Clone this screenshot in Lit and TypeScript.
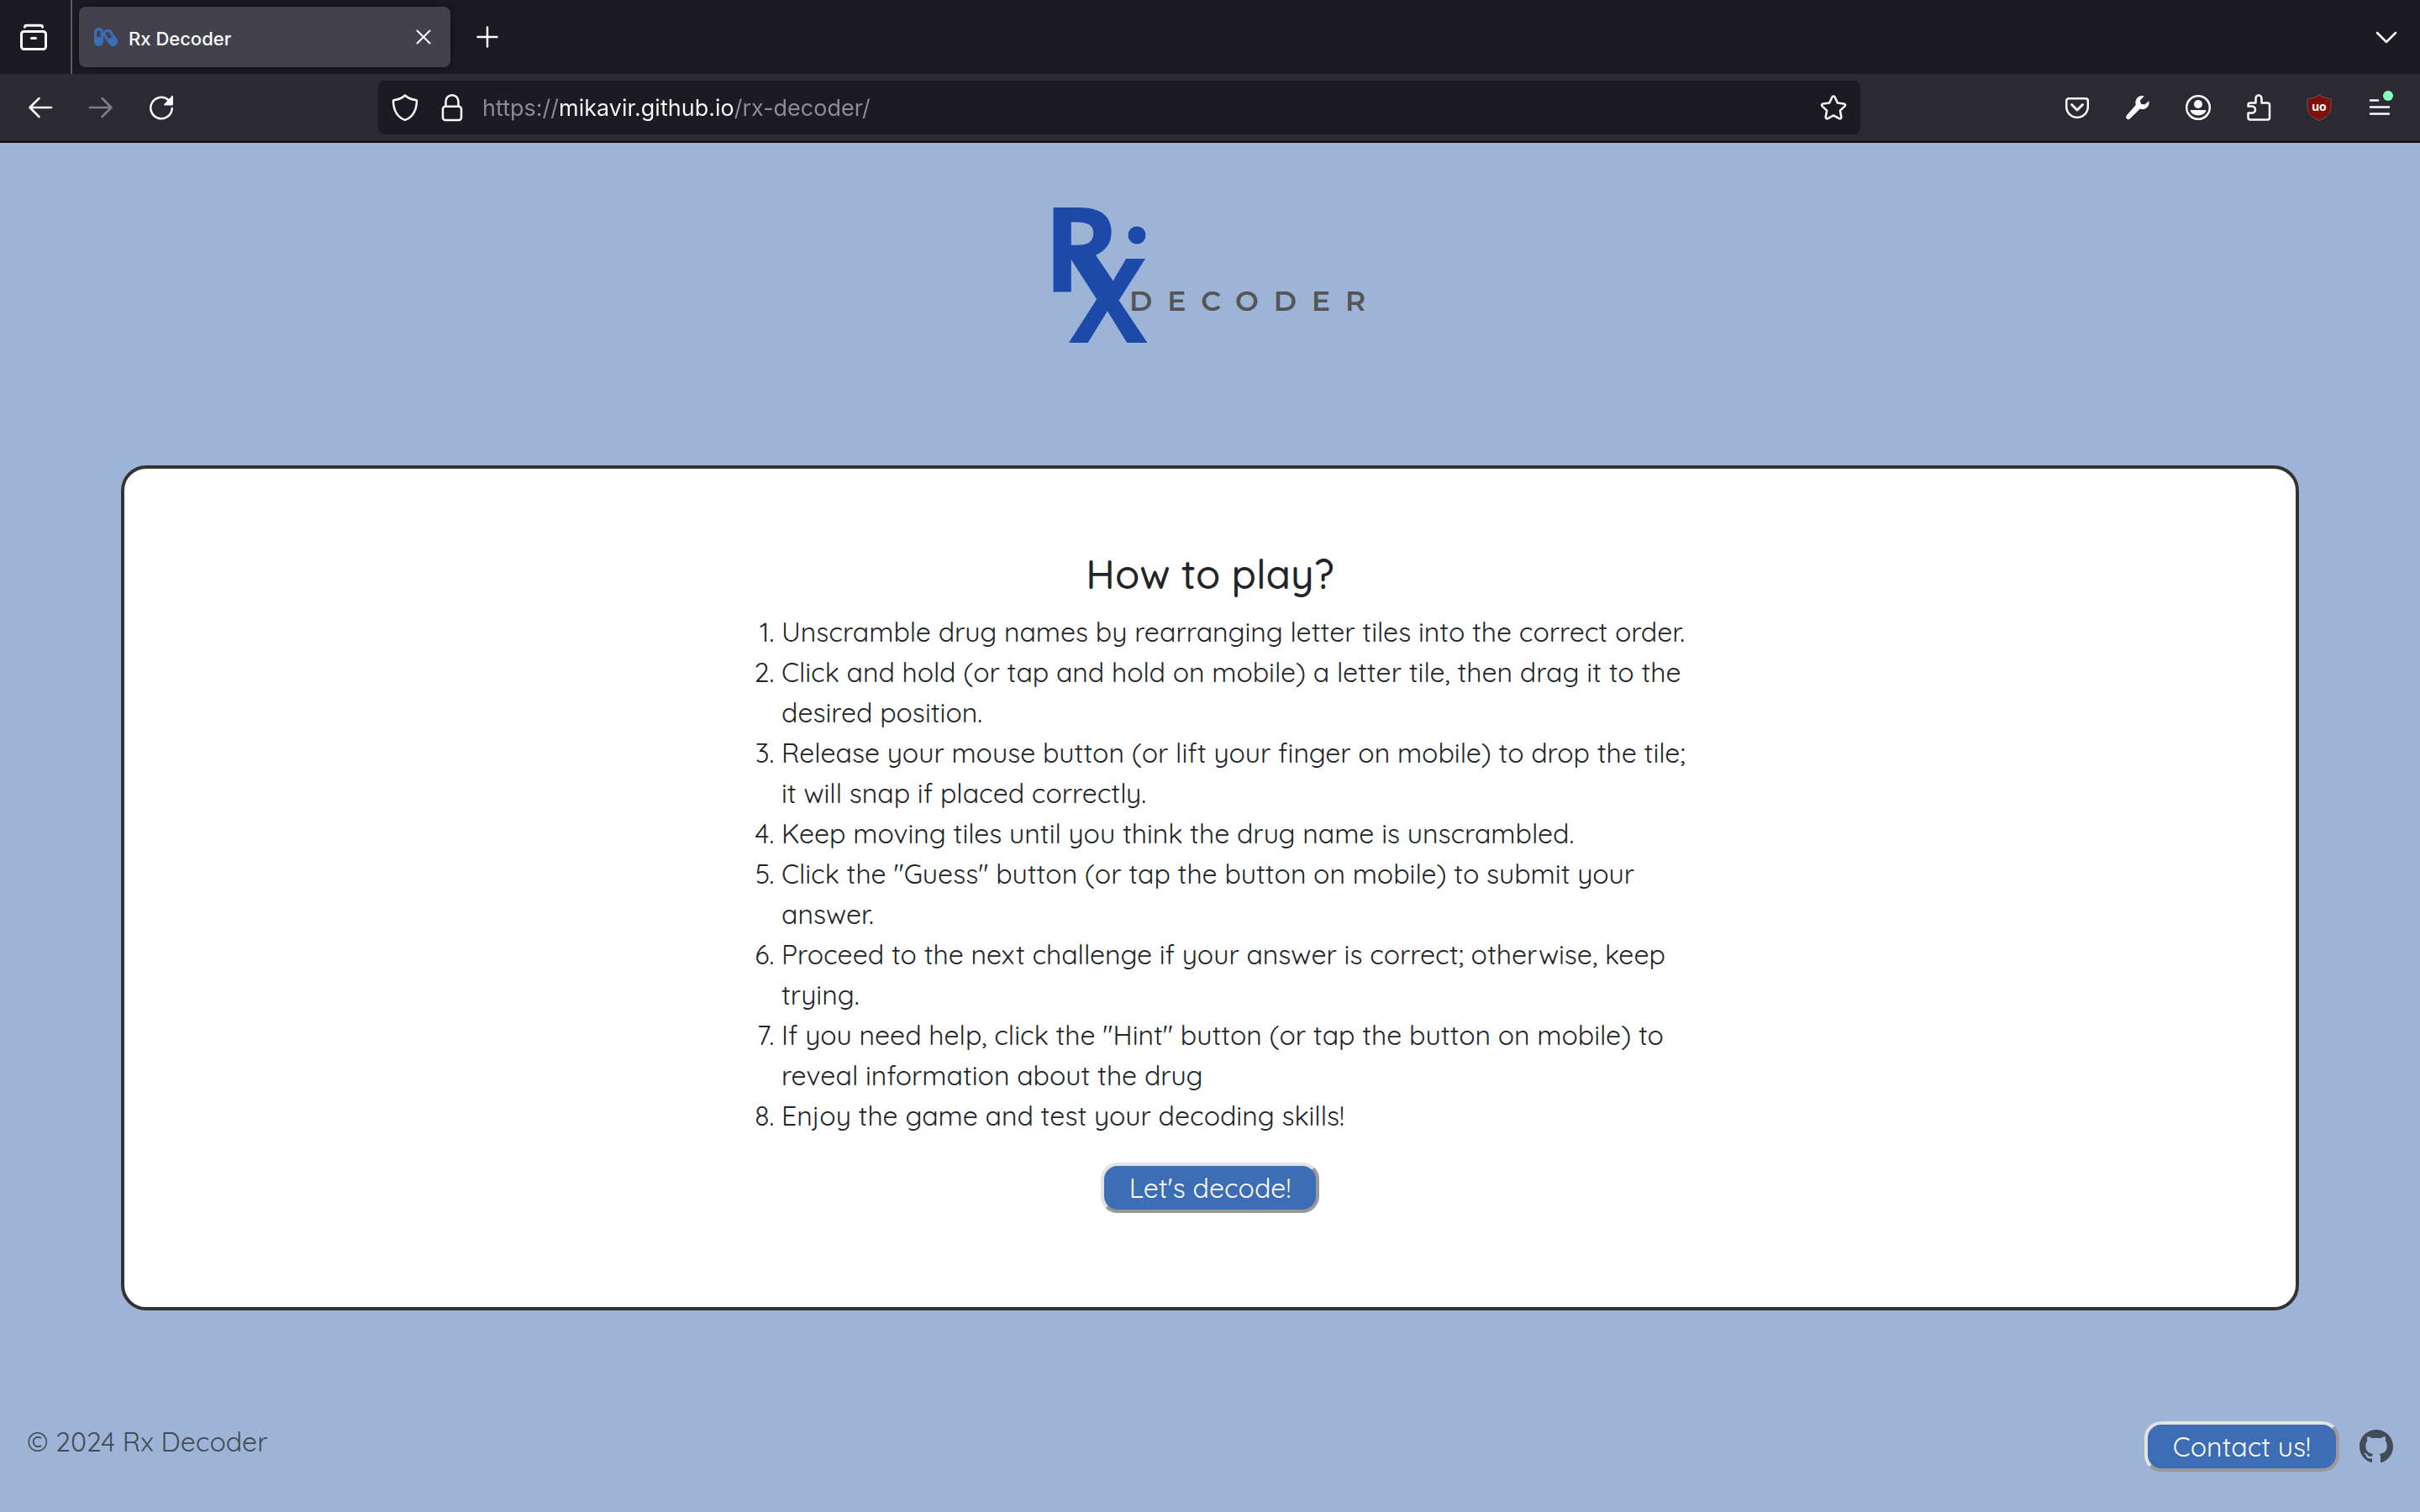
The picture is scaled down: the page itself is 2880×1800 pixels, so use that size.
import { LitElement, html, svg, css } from "lit";
import { customElement } from "lit/decorators.js";

const line = (body: unknown) => html`<svg class="icon" viewBox="0 0 32 32" aria-hidden="true">${body}</svg>`;

const icons = {
  view: line(svg`<path d="M5.500 4.300V4a2 2 0 0 1 2-1.800h17a2 2 0 0 1 2 1.800v.3M13.500 17.500h5" stroke-width="3"/><rect x="1.500" y="9.500" width="29" height="21" rx="3" stroke-width="3"/>`),
  close: line(svg`<path d="M8.500 8.500l15 15M23.500 8.500l-15 15" stroke-width="2"/>`),
  plus: line(svg`<path d="M16 4.500v23M4.500 16h23" stroke-width="2.500"/>`),
  chevron: line(svg`<path d="M5 11l11 11 11-11"/>`),
  back: line(svg`<path d="M29 16H3.500M14.500 5L3.500 16l11 11"/>`),
  forward: line(svg`<path d="M3 16h25.500M17.500 5l11 11-11 11"/>`),
  reload: line(svg`<path d="M28.700 17A12.700 12.700 0 1 1 24.800 7.400"/><path class="solid" d="M30 2.600v10a.8.8 0 0 1-.8.8h-9.200c-.8 0-1.100-.9-.6-1.400L28.600 2c.5-.5 1.400-.2 1.400.6z"/>`),
  shield: line(svg`<path d="M16 1.500c3.500 3.200 8 5 12.500 5.500 1 .1 1.500.8 1.500 1.700C29.500 20 25 27.500 16 30.800 7 27.500 2.500 20 2 8.700 2 7.800 2.500 7.100 3.500 7 8 6.500 12.500 4.700 16 1.500z"/>`),
  lock: line(svg`<path d="M8.500 14.500V8.700a7.500 7.500 0 0 1 15 0v5.800"/><rect x="5" y="14.700" width="22" height="16.300" rx="3"/>`),
  star: line(svg`<path d="M16 2.500c.7 0 1.300.4 1.600 1l3.200 7 7.700 1c1.500.2 2 1.900 1 2.900l-5.600 5.300 1.400 7.600c.2 1.400-1.200 2.500-2.500 1.800L16 25.400l-6.800 3.700c-1.300.7-2.700-.4-2.500-1.800l1.400-7.600-5.600-5.300c-1-1-.5-2.700 1-2.900l7.700-1 3.200-7c.3-.6.900-1 1.600-1z"/>`),
  pocket: line(svg`<path d="M6 5.200h20a2.800 2.800 0 0 1 2.800 2.800v7a12.800 12.800 0 0 1-25.600 0V8A2.800 2.800 0 0 1 6 5.200z"/><path d="M9.500 12.500l6.500 6.500 6.500-6.500" stroke-width="3"/>`),
  wrench: line(svg`<path class="solid" d="M29.400 8.200l-5.200 4.400-4.200-.800-1.200-4L23.600 2.400c-3.400-.9-7.400.4-9.200 3.600-1.300 2.300-1.300 4.500-.5 6.800L2.800 25.600a2.700 2.700 0 0 0 3.800 3.800L18.800 17.600c2.600 1 5.800.5 8-1.400 2.400-2.100 3.400-5.200 2.600-8z"/>`),
  account: line(svg`<circle cx="16" cy="16" r="13.800"/><circle class="solid" cx="16" cy="12" r="5"/><path class="solid" d="M7.500 19h17c.6 0 1 .6.800 1.100C24 23.400 20.300 25.500 16 25.500S8 23.400 6.700 20.100c-.2-.5.2-1.100.8-1.100z"/>`),
  puzzle: line(svg`<path d="M12.500 10.500V5a3.500 3.500 0 0 1 7 0v5.500h7a2.500 2.500 0 0 1 2.500 2.500v15a2.500 2.500 0 0 1-2.500 2.500H6A2.500 2.500 0 0 1 3.500 28v-5.500H8a4 4 0 0 0 0-8H3.500V13A2.500 2.500 0 0 1 6 10.500z"/>`),
  blocker: line(svg`<path d="M16 .8c3.600 2.800 8.200 4.400 14 4.600v11.100C30 23.500 24 28.500 16 31.300 8 28.500 2 23.500 2 16.500V5.400C7.800 5.200 12.400 3.600 16 .8z" fill="#7c100a" stroke="#6e5056" stroke-width="1"/><text class="badge" x="16" y="20" text-anchor="middle">uo</text>`),
  menu: line(svg`<path d="M5 7.500h9M5 15.500h22M5 23.500h22"/><circle cx="26" cy="2" r="6" fill="#88ffbf" stroke="none"/>`),
};

@customElement("browser-bar")
export class BrowserBar extends LitElement {
  static styles = css`
    :host { display: block; font-family: Inter, "Liberation Sans", sans-serif; color: #fbfbfe; }
    button { display: flex; align-items: center; justify-content: center; padding: 0; border: 0; background: none; color: inherit; font: inherit; }
    .icon { display: block; width: 32px; height: 32px; overflow: visible; fill: none; stroke: currentColor; stroke-width: 2.500; stroke-linecap: round; stroke-linejoin: round; }
    .solid { fill: currentColor; stroke: none; }
    .badge { fill: #ffffff; stroke: none; font-size: 14px; font-weight: 700; }
    .tabs { display: flex; align-items: center; height: 88px; background: #1c1b22; }
    .view { box-sizing: border-box; width: 86px; height: 88px; padding-right: 4px; border-right: 2px solid #5b5b66; }
    .tab { display: flex; align-items: center; width: 442px; height: 72px; box-sizing: border-box; margin-left: 8px; padding: 0 16px 0 18px; border-radius: 8px; background: #42414d; box-shadow: 0 0 8px rgba(0, 0, 0, 0.5); }
    .favicon { width: 28px; height: 24px; fill: #3c6db7; }
    .title { flex: 1; margin-left: 13px; padding-top: 3px; font-size: 22px; font-weight: 500; line-height: 32px; }
    .new { width: 72px; height: 72px; margin-left: 8px; }
    .list { width: 72px; height: 72px; margin: 0 4px 0 auto; }
    .tools { display: flex; align-items: center; height: 80px; padding: 0 12px; border-bottom: 2px solid #0c0c0d; background: #2b2a33; }
    .tool { width: 72px; height: 64px; }
    .dim { color: #7f7e86; }
    .spring { flex: 10; }
    .address { display: flex; flex: 78; align-items: center; box-sizing: border-box; height: 64px; min-width: 0; padding: 0 16px; border-radius: 8px; background: #1c1b22; }
    .lock { margin-left: 24px; }
    .url { flex: 1; min-width: 0; height: 48px; margin: 0 20px; padding: 0; border: 0; outline: 0; font-family: inherit; font-size: 27px; color: #fbfbfe;
      background: linear-gradient(90deg, #8d8d93 92px, #fbfbfe 92px, #fbfbfe 299px, #8d8d93 299px); -webkit-background-clip: text; background-clip: text; -webkit-text-fill-color: transparent; }
  `;

  render() {
    return html`
      <div class="tabs">
        <button class="view" aria-label="View recent browsing">${icons.view}</button>
        <div class="tab">
          <svg class="favicon" viewBox="0 16 576 480" aria-hidden="true"><path d="M555.3 300.1L424.3 112.8C401.9 80.7 366.4 64 330.4 64c-22.6 0-45.5 6.6-65.4 20.500-19.1 13.3-32 31.900-39.3 52C221.900 77.4 173.1 32 112 32 50.1 32 0 82.1 0 144v224c0 61.900 50.1 112 112 112s112-50.1 112-112V218.900c3.3 8.6 7.3 17.1 12.8 25L368 431.2c22.3 32.1 57.900 48.8 93.8 48.8 22.7 0 45.500-6.6 65.500-20.4 51.7-36 64.2-107.2 28-159.500zM160 256H64V144c0-26.500 21.500-48 48-48s48 21.500 48 48v112zm194.8 44.900l-65.6-93.7c-7.7-11-10.7-24.4-8.3-37.6 2.3-13.2 9.7-24.8 20.7-32.500 8.500-6 18.500-9.1 28.8-9.1 16.500 0 31.900 8 41.3 21.500l65.6 93.7-82.500 57.7z"/></svg>
          <span class="title">Rx Decoder</span>
          <button aria-label="Close tab">${icons.close}</button>
        </div>
        <button class="new" aria-label="New tab">${icons.plus}</button>
        <button class="list" aria-label="List all tabs">${icons.chevron}</button>
      </div>
      <div class="tools">
        <button class="tool" aria-label="Back">${icons.back}</button>
        <button class="tool dim" aria-label="Forward">${icons.forward}</button>
        <button class="tool" aria-label="Reload">${icons.reload}</button>
        <span class="spring"></span>
        <div class="address">
          <button aria-label="Tracking protection">${icons.shield}</button>
          <button class="lock" aria-label="Connection secure">${icons.lock}</button>
          <input class="url" type="text" aria-label="Address" value="https://mikavir.github.io/rx-decoder/" />
          <button aria-label="Bookmark this page">${icons.star}</button>
        </div>
        <span class="spring"></span>
        <button class="tool" aria-label="Save to Pocket">${icons.pocket}</button>
        <button class="tool" aria-label="Developer tools">${icons.wrench}</button>
        <button class="tool" aria-label="Account">${icons.account}</button>
        <button class="tool" aria-label="Extensions">${icons.puzzle}</button>
        <button class="tool" aria-label="Content blocker">${icons.blocker}</button>
        <button class="tool" aria-label="Application menu">${icons.menu}</button>
      </div>
    `;
  }
}

@customElement("rx-logo")
export class RxLogo extends LitElement {
  static styles = css`
    :host { display: block; }
    .logo { display: block; width: 376px; height: 164px; overflow: visible; }
    .mark { fill: #1d4aa8; font-family: "Open Sans", sans-serif; font-size: 140px; font-weight: 700; }
    .word { fill: #555555; font-family: Montserrat, Inter, sans-serif; font-size: 33px; font-weight: 600; letter-spacing: 18px; }
  `;

  render() {
    return html`
      <svg class="logo" viewBox="0 0 376 164" role="img" aria-label="Rx Decoder">
        <text class="mark" x="-11" y="101">R</text>
        <text class="mark" x="20" y="162">X</text>
        <circle cx="101" cy="34" r="10.500" fill="#1d4aa8" />
        <text class="word" x="92" y="124">DECODER</text>
      </svg>
    `;
  }
}

const steps = [
  "Unscramble drug names by rearranging letter tiles into the correct order.",
  "Click and hold (or tap and hold on mobile) a letter tile, then drag it to the desired position.",
  "Release your mouse button (or lift your finger on mobile) to drop the tile; it will snap if placed correctly.",
  "Keep moving tiles until you think the drug name is unscrambled.",
  'Click the "Guess" button (or tap the button on mobile) to submit your answer.',
  "Proceed to the next challenge if your answer is correct; otherwise, keep trying.",
  'If you need help, click the "Hint" button (or tap the button on mobile) to reveal information about the drug',
  "Enjoy the game and test your decoding skills!",
];

@customElement("app-root")
export class AppRoot extends LitElement {
  static styles = css`
    :host { display: flex; flex-direction: column; min-height: 100vh; background: #9db4d7; color: #212529; font-family: Quicksand, Lato, sans-serif; font-size: 32px; line-height: 48px; }
    .header { display: flex; justify-content: center; padding: 76px 0 144px; }
    .card { display: flex; flex-direction: column; align-items: center; margin: 0 5%; padding: 96px 32px 112px; border: 4px solid #333333; border-radius: 30px; background: #ffffff; }
    .heading { margin: 0 0 16px; font-size: 48px; font-weight: 500; line-height: 58px; }
    .steps { width: 100%; max-width: 1152px; box-sizing: border-box; margin: 0 0 32px; padding: 0 0 0 66px; }
    .button { box-sizing: border-box; height: 60px; padding: 0 30px; border: 4px solid; border-color: #e3e3e3 #999999 #999999 #e3e3e3; border-radius: 20px; background: #3c6db5; color: #ffffff; font: inherit; }
    .footer { display: flex; align-items: flex-start; justify-content: space-between; margin-top: auto; padding: 48px 32px; color: #424c57; }
    .copy { margin: 0; }
    .contact { display: flex; align-items: center; gap: 24px; }
    .github { display: block; color: inherit; }
    .octocat { display: block; width: 40px; height: 40px; fill: currentColor; }
  `;

  render() {
    return html`
      <browser-bar></browser-bar>
      <header class="header"><rx-logo></rx-logo></header>
      <main class="card">
        <h1 class="heading">How to play?</h1>
        <ol class="steps">${steps.map((step) => html`<li>${step}</li>`)}</ol>
        <button class="button">Let's decode!</button>
      </main>
      <footer class="footer">
        <p class="copy">© 2024 Rx Decoder</p>
        <div class="contact">
          <button class="button">Contact us!</button>
          <a class="github" href="https://github.com/mikavir/rx-decoder" aria-label="GitHub">
            <svg class="octocat" viewBox="0 0 16 16" aria-hidden="true"><path d="M8 0C3.58 0 0 3.58 0 8c0 3.54 2.29 6.53 5.47 7.59.4.07.55-.17.55-.38 0-.19-.01-.82-.01-1.49-2.01.37-2.53-.49-2.69-.94-.09-.23-.48-.94-.82-1.13-.28-.15-.68-.52-.01-.53.63-.01 1.08.58 1.23.82.72 1.21 1.87.87 2.33.66.07-.52.28-.87.51-1.07-1.78-.2-3.64-.89-3.64-3.95 0-.87.31-1.59.82-2.15-.08-.2-.36-1.02.08-2.12 0 0 .67-.21 2.2.82.64-.18 1.32-.27 2-.27.68 0 1.36.09 2 .27 1.53-1.04 2.2-.82 2.2-.82.44 1.1.16 1.92.08 2.12.51.56.82 1.27.82 2.15 0 3.07-1.87 3.75-3.65 3.95.29.25.54.73.54 1.48 0 1.07-.01 1.93-.01 2.2 0 .21.15.46.55.38A8.012 8.012 0 0 0 16 8c0-4.42-3.58-8-8-8z"/></svg>
          </a>
        </div>
      </footer>
    `;
  }
}
